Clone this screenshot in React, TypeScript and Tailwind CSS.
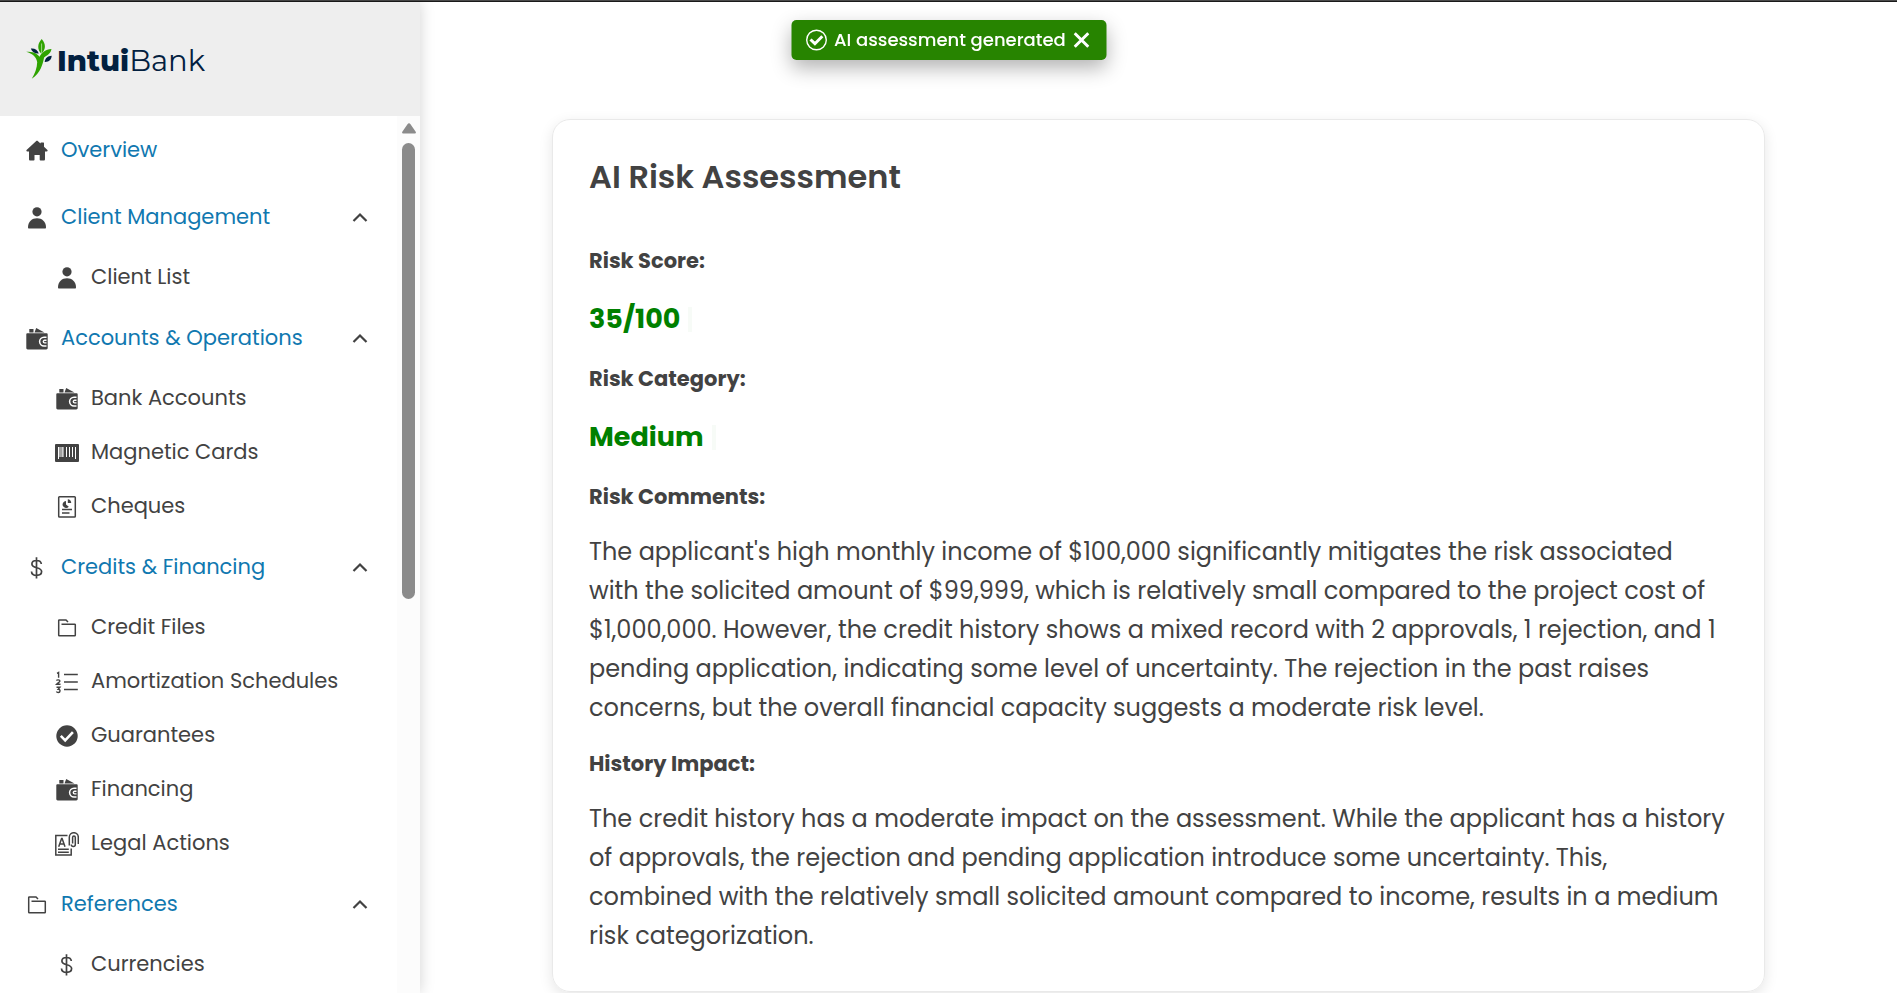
import type { ReactNode } from 'react'

type IconName =
  | 'home'
  | 'person'
  | 'wallet'
  | 'barcode'
  | 'cheque'
  | 'dollar'
  | 'folder'
  | 'list'
  | 'check'
  | 'legal'

const icons: Record<IconName, ReactNode> = {
  home: (
    <path
      fill="currentColor"
      d="M12 1.800c.4 0 .7.1 1 .4l2.500 2.200V4.100c0-.3.2-.5.5-.5h2.500c.3 0 .5.2.5.500v3.600l3.200 3.100c.8.800.4 1.700-.5 1.700H20V20.200c0 .800-.5 1.300-1.300 1.300h-3.200c-.500 0-.8-.300-.8-.8v-4.800H9.500v4.800c0 .500-.3.800-.8.800H5.300c-.8 0-1.300-.500-1.300-1.300v-7.700H2.300c-.9 0-1.300-.9-.5-1.700l9.200-8.600c.3-.3.600-.4 1-.4z"
    />
  ),
  person: (
    <g fill="currentColor">
      <circle cx="12" cy="5.800" r="4.600" />
      <path d="M3 21.300C3 15.500 7 12.200 12 12.200s9 3.300 9 9.100c0 .9-.3 1.200-1 1.200H4c-.7 0-1-.3-1-1.200z" />
    </g>
  ),
  wallet: (
    <>
      <g fill="currentColor">
        <path d="M4.300 2H8.500v3.500H4.300zM9.500 5.500L11.200 1l8.300 4.500z" />
        <path d="M2.200 6.300h19.600c.5 0 .9.400.9.900v13.900c0 .8-.6 1.400-1.400 1.400H2.700c-.8 0-1.400-.6-1.400-1.400V7.200c0-.5.400-.9.900-.9z" />
      </g>
      <path d="M21.500 10.200h-2.500a4.400 4.400 0 0 0 0 8.800h2.500" fill="none" stroke="white" strokeWidth="1.500" />
      <path d="M21.500 13.300h-1.900a1.300 1.300 0 0 0 0 2.600h1.900" fill="none" stroke="white" strokeWidth="1.400" />
    </>
  ),
  barcode: (
    <>
      <rect x="0" y="3" width="24" height="18" rx="1" fill="currentColor" />
      <path
        d="M3.500 6v12M7 6v10M8 6v10M11.500 6v10M14.500 6v10M17.500 6v10M20.500 6v12M3 17.500h1M20 17.500h1M5 6v10"
        stroke="white"
        strokeWidth="1"
      />
    </>
  ),
  cheque: (
    <>
      <rect x="3.700" y="1.700" width="16.600" height="20.300" rx="0.800" fill="none" stroke="currentColor" strokeWidth="1.500" />
      <path d="M11 6v3.500l2.800 2.200A3.500 3.500 0 1 1 11 6z" fill="currentColor" />
      <path d="M12.800 4.300v3.800h3.400a3.500 3.500 0 0 0-3.400-3.800z" fill="currentColor" />
      <path d="M7 14.500h10M7 18h7.500" stroke="currentColor" strokeWidth="1.500" />
    </>
  ),
  dollar: (
    <path
      d="M11.500 1.200v21.300M16.300 8c-.2-2.300-1.900-3.500-4.700-3.500-2.900 0-4.700 1.300-4.700 3.500 0 5 9.700 2.500 9.700 7.600 0 2.400-2 3.800-5 3.800-3.100 0-5-1.400-5.100-3.900"
      fill="none"
      stroke="currentColor"
      strokeWidth="1.700"
    />
  ),
  folder: (
    <path
      d="M13 6L11 4H4.300a.6.600 0 0 0-.6.600v14.600c0 .3.300.6.600.6h15.400c.3 0 .6-.3.600-.6V8.800a.6.600 0 0 0-.6-.6H6.500"
      fill="none"
      stroke="currentColor"
      strokeWidth="1.500"
    />
  ),
  list: (
    <>
      <path d="M9 4.500h13.800M9 12h13.800M9 19.500h13.800" stroke="currentColor" strokeWidth="1.500" />
      <path
        d="M2 3.300l1.600-.8v5.300M1.500 10.600c.3-1 3.400-1.100 3.400.300 0 1-1.600 1.600-3.300 3.400h3.900M1.500 17.300h3.400l-1.700 2c2.600 0 2.300 3.200 0 3.200-.9 0-1.500-.4-1.800-1"
        fill="none"
        stroke="currentColor"
        strokeWidth="1.400"
      />
    </>
  ),
  check: (
    <>
      <circle cx="12" cy="12" r="10.700" fill="currentColor" />
      <path d="M5.800 11.800l4.400 4.500 7.700-8.200" fill="none" stroke="white" strokeWidth="2.600" />
    </>
  ),
  legal: (
    <g fill="none" stroke="currentColor" strokeWidth="1.500">
      <path d="M12.500 3.500H.800v19.500h15.400v-6.500M3 17.300h10.800M3 20.200h10.800" />
      <path d="M3.700 14.800L6.600 6.600h.5L10 14.800M4.700 12h4.400" />
      <path d="M14.300 13.500V5.200a4.500 4.500 0 0 1 9 0v6.800M16.300 12.500a2 2 0 0 0 4 0V5.500c0-1.900-2.700-1.900-2.700 0v6" />
    </g>
  ),
}

function Icon({ name }: { name: IconName }) {
  return (
    <svg viewBox="0 0 24 24" className="mt-0.5 size-6 shrink-0" aria-hidden="true">
      {icons[name]}
    </svg>
  )
}

type Item = { label: string; icon: IconName }
type Section = Item & { children: Item[] }

const sections: Section[] = [
  {
    label: 'Client Management',
    icon: 'person',
    children: [{ label: 'Client List', icon: 'person' }],
  },
  {
    label: 'Accounts & Operations',
    icon: 'wallet',
    children: [
      { label: 'Bank Accounts', icon: 'wallet' },
      { label: 'Magnetic Cards', icon: 'barcode' },
      { label: 'Cheques', icon: 'cheque' },
    ],
  },
  {
    label: 'Credits & Financing',
    icon: 'dollar',
    children: [
      { label: 'Credit Files', icon: 'folder' },
      { label: 'Amortization Schedules', icon: 'list' },
      { label: 'Guarantees', icon: 'check' },
      { label: 'Financing', icon: 'wallet' },
      { label: 'Legal Actions', icon: 'legal' },
    ],
  },
  {
    label: 'References',
    icon: 'folder',
    children: [{ label: 'Currencies', icon: 'dollar' }],
  },
]

function Logo() {
  return (
    <a href="#home" className="flex items-center gap-[5px] text-[#02203f]">
      <svg viewBox="0 0 26 40" className="h-10 w-[26px]" aria-hidden="true">
        <g fill="#2fa300">
          <path d="M15.700 0c4.600 5.500 4 10-.2 14.800C11 10.500 11.200 5 15.700 0z" />
          <path d="M.200 12.700c6.500 0 10.800 1.300 13.300 5 2-3.800 6-7.400 12-7.700-.8 4.500-4 6-7.400 8.500-1.300 6.500-3.500 15.500-12.300 21.300 3.200-5.600 5.200-10.800 5.400-16.600C10.700 18.300 6.500 14.500.200 12.700z" />
        </g>
        <path d="M15.600 4.500v10" stroke="#b8e3a4" strokeWidth="0.800" />
        <g fill="#02203f">
          <path d="M4.800 9.600c4-.4 6.800 1.400 8 5-4.200.2-6.600-1.500-8-5z" />
          <path d="M25.700 16.700c-.4 4.200-2.800 6.400-7 6.200.4-3.800 3-6 7-6.200z" />
        </g>
      </svg>
      <span className="pt-0.5 font-[Montserrat,Poppins,Inter,sans-serif] text-[29px] leading-none">
        <b className="font-extrabold">Intui</b>Bank
      </span>
    </a>
  )
}

function Sidebar() {
  return (
    <aside className="flex w-[420px] shrink-0 flex-col overflow-hidden bg-white shadow-[0_0_14px_rgba(0,0,0,0.18)]">
      <header className="flex h-[114px] shrink-0 items-center bg-[#eeeeee] pl-[26px]">
        <Logo />
      </header>
      <div className="flex min-h-0 flex-1">
        <nav className="min-w-0 flex-1 overflow-hidden text-[21px]">
          <a href="#overview" className="flex h-[67px] items-center gap-3 pl-[25px]">
            <Icon name="home" />
            <span className="text-[#1078b0]">Overview</span>
          </a>
          {sections.map((section) => (
            <section key={section.label}>
              <button
                type="button"
                aria-expanded="true"
                className="flex h-[67px] w-full items-center gap-3 pr-[29px] pl-[25px] text-left"
              >
                <Icon name={section.icon} />
                <span className="flex-1 whitespace-nowrap text-[#1078b0]">{section.label}</span>
                <svg viewBox="0 0 16 16" className="size-4 shrink-0" aria-hidden="true">
                  <path d="M1.500 12L8 5.500l6.500 6.500" fill="none" stroke="currentColor" strokeWidth="2.200" />
                </svg>
              </button>
              <ul>
                {section.children.map((item) => (
                  <li key={item.label}>
                    <a
                      href={`#${item.label}`}
                      className="flex h-[54px] items-center gap-3 pl-[55px] whitespace-nowrap"
                    >
                      <Icon name={item.icon} />
                      {item.label}
                    </a>
                  </li>
                ))}
              </ul>
            </section>
          ))}
        </nav>
        <div className="flex w-[23px] flex-col items-center gap-2 bg-[#fcfcfc] pt-[6px]" aria-hidden="true">
          <svg viewBox="0 0 14 13" className="h-[13px] w-[14px]">
            <path d="M5.500 2.200c.8-1.200 2.200-1.200 3 0l5.200 7.600c.5.900.2 1.700-.8 1.700H1.100c-1 0-1.300-.8-.8-1.700z" fill="#8b8b8b" />
          </svg>
          <div className="h-[456px] w-[13px] rounded-full bg-[#8b8b8b]" />
        </div>
      </div>
    </aside>
  )
}

function Toast() {
  return (
    <div
      role="status"
      className="fixed top-5 left-1/2 z-10 flex h-10 w-[315px] -translate-x-1/2 items-center gap-[7px] rounded-[5px] bg-[#278400] pl-[14px] font-medium text-white shadow-[0_8px_20px_rgba(0,0,0,0.3)]"
    >
      <svg viewBox="0 0 22 22" className="size-[22px] shrink-0" fill="none" stroke="white" aria-hidden="true">
        <circle cx="11" cy="11" r="9.800" strokeWidth="1.400" />
        <path d="M5 10.500l4.400 4.200 7.400-7.500" strokeWidth="3" />
      </svg>
      <span className="flex-1 pb-0.5 text-[18px] whitespace-nowrap">AI assessment generated</span>
      <button type="button" aria-label="Close" className="mr-[17px]">
        <svg viewBox="0 0 16 16" className="size-4" aria-hidden="true">
          <path d="M1.200 1.200l13.600 13.600M14.800 1.200L1.200 14.800" stroke="white" strokeWidth="3" />
        </svg>
      </button>
    </div>
  )
}

function Label({ children }: { children: ReactNode }) {
  return <h2 className="text-[21px] leading-8 font-bold">{children}</h2>
}

function Value({ children }: { children: ReactNode }) {
  return (
    <p className="mt-[23px] mb-[25px] flex items-center gap-2 text-[27px] leading-[38px] font-bold text-[#008000]">
      {children}
      <span className="h-[25px] w-1 bg-[#f7fbf7]" />
    </p>
  )
}

export default function App() {
  return (
    <div
      className="flex h-screen flex-col overflow-hidden bg-white text-[#424242]"
      style={{ fontFamily: 'Poppins, Inter, "Noto Sans", sans-serif' }}
    >
      <div className="h-[2px] shrink-0 border-b border-[#1a1a1a] bg-[#4a4a4a]" />
      <Toast />
      <div className="flex min-h-0 flex-1">
        <Sidebar />
        <main className="min-w-0 flex-1 overflow-hidden px-8 pt-[117px]">
          <article className="mx-auto max-w-[1213px] rounded-[18px] border border-[#e9e9e9] pt-[33px] pr-[38px] pb-9 pl-9 shadow-[0_4px_14px_rgba(0,0,0,0.1)]">
            <h1 className="text-[32px] leading-12 font-semibold">AI Risk Assessment</h1>
            <div className="mt-11">
              <Label>Risk Score:</Label>
              <Value>35/100</Value>
              <Label>Risk Category:</Label>
              <Value>Medium</Value>
              <Label>Risk Comments:</Label>
              <p className="mt-[19px] mb-[21px] text-[24px] leading-[39px]">
                The applicant's high monthly income of $100,000 significantly mitigates the risk associated with the
                solicited amount of $99,999, which is relatively small compared to the project cost of $1,000,000.
                However, the credit history shows a mixed record with 2 approvals, 1 rejection, and 1 pending
                application, indicating some level of uncertainty. The rejection in the past raises concerns, but the
                overall financial capacity suggests a moderate risk level.
              </p>
              <Label>History Impact:</Label>
              <p className="mt-[19px] text-[24px] leading-[39px]">
                The credit history has a moderate impact on the assessment. While the applicant has a history of
                approvals, the rejection and pending application introduce some uncertainty. This, combined with the
                relatively small solicited amount compared to income, results in a medium risk categorization.
              </p>
            </div>
          </article>
        </main>
      </div>
    </div>
  )
}
